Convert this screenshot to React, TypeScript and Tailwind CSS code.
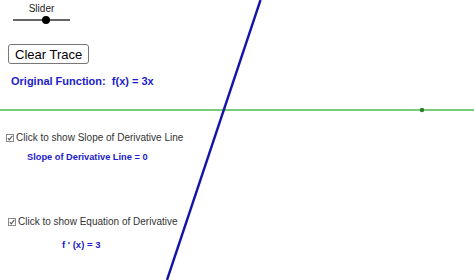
import React from 'react'

const Check = () => (
    <svg width="8" height="8" viewBox="0 0 8 8" className="shrink-0">
        <rect x="0.5" y="0.5" width="7" height="7" fill="#fff" stroke="#8a8a8a" />
        <path d="M1.8 4.2 L3.3 5.8 L6.3 1.9" fill="none" stroke="#555" strokeWidth="1.1" />
    </svg>
)

const App = () => {
    return (
        <div className="relative w-[474px] h-[280px] overflow-hidden bg-white font-['Liberation_Sans',Arial,sans-serif]">
            {/* graphics view */}
            <svg className="absolute inset-0" width="474" height="280">
                <line x1="0" y1="110" x2="474" y2="110" stroke="#4cbb4c" strokeWidth="1.6" />
                <circle cx="422" cy="110" r="2.2" fill="#2e7a2e" />
                <line x1="260.5" y1="0" x2="167" y2="280" stroke="#1414a8" strokeWidth="2.4" />
            </svg>

            <div className="relative flex flex-col items-start">
                <div className="ml-[13px] mt-[3px] flex flex-col items-center w-[57px]">
                    <span className="text-[10px] leading-[12px] text-[#222]">Slider</span>
                    <div className="relative w-full h-[9px] flex items-center">
                        <div className="w-full h-[2px] bg-[#666]" />
                        <div className="absolute left-[29px] w-[8px] h-[8px] rounded-full bg-black" />
                    </div>
                </div>

                <button className="ml-[8px] mt-[20px] h-[20px] px-[6px] border border-[#777] rounded-[3px] bg-white text-[13px] leading-none text-black">
                    Clear Trace
                </button>

                <div className="ml-[11px] mt-[11px] text-[11px] leading-[13px] font-bold text-[#1c1cc8] whitespace-pre">
                    Original Function:  f(x) = 3x
                </div>

                <div className="ml-[6px] mt-[44px] flex items-center gap-[2px] text-[10px] leading-[12px] text-[#333]">
                    <Check />
                    <span>Click to show Slope of Derivative Line</span>
                </div>
                <div className="ml-[27px] mt-[8px] text-[9.25px] leading-[11px] font-bold text-[#1c1cc8]">
                    Slope of Derivative Line = 0
                </div>

                <div className="ml-[8px] mt-[53px] flex items-center gap-[2px] text-[10px] leading-[12px] text-[#333]">
                    <Check />
                    <span>Click to show Equation of Derivative</span>
                </div>
                <div className="ml-[62px] mt-[11px] text-[9.5px] leading-[11px] font-bold text-[#1c1cc8] whitespace-pre">
                    f ' (x) = 3
                </div>
            </div>
        </div>
    )
}

export default App
